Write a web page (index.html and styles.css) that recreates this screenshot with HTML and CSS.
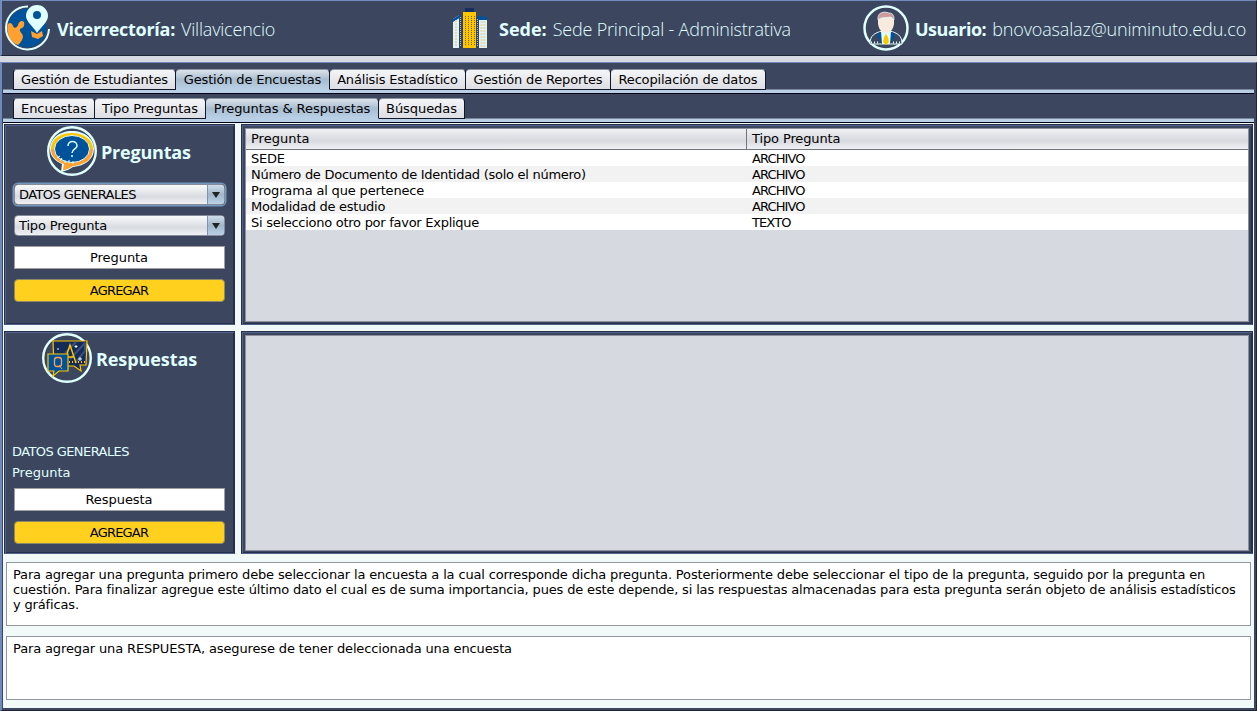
FILE: index.html
```
<!DOCTYPE html>
<html lang="es">
<head>
<meta charset="utf-8">
<title>Gestión de Encuestas</title>
<link rel="stylesheet" href="styles.css">
</head>
<body>
<header class="top">
  <div class="info place">
    <svg class="ic-globe" width="50" height="50" viewBox="0 0 50 50">
      <circle cx="23" cy="26" r="19.500" fill="#00529b"/>
      <path d="M4 22c2-2 4-1 5 2 1 3 4 2 5-1 1-4 4-5 6-3 1 4-1 6-4 7-1 3 3 4 3 8-1 4-3 6-5 8-6-2-10-7-10-13-1-3-1-5 0-8z" fill="#ffa030"/>
      <path d="M27 29l6 3 5-3 1 5-5 3-6-2z" fill="#ffa030"/>
      <path d="M24 4.500A21.500 21.500 0 1 0 45 27" fill="none" stroke="#e0ffff" stroke-width="2"/>
      <path d="M33 31c-3-6-11-11-11-17a11 11 0 0 1 22 0c0 6-7 11-11 17z" fill="#e0ffff"/>
      <circle cx="33" cy="13" r="4" fill="#00529b"/>
    </svg>
    <b>Vicerrectoría:</b><span>Villavicencio</span>
  </div>
  <div class="info site">
    <svg width="36" height="42" viewBox="0 0 36 42">
      <path d="M1 12l8-5v34H1z" fill="#e0f4f4"/><path d="M1 12l8-5v3l-8 5z" fill="#00529b"/>
      <path d="M4 13v27M8 11v29" stroke="#ead8ac" stroke-width="2" stroke-dasharray="2 1"/>
      <path d="M7 7h4v34H7zM24 9h4v32h-4z" fill="#294475"/>
      <path d="M8.500 10v30M25.500 12v28" stroke="#d5b980" stroke-dasharray="1 1"/>
      <path d="M27 10h8v31h-8z" fill="#e0f4f4"/><path d="M26 9l9 1v3h-9z" fill="#00529b"/>
      <path d="M29.500 14v26M32.500 14v26" stroke="#ead8ac" stroke-width="2" stroke-dasharray="2 1"/>
      <path d="M13 1h9v5h-9z" fill="#143060"/><path d="M11 5h13v36H11z" fill="#ffc600"/>
      <path d="M13.500 9v30M16.500 9v30M19.500 9v30M22.500 9v30" stroke="#6d6530" stroke-dasharray="1 1"/>
    </svg>
    <b>Sede:</b><span>Sede Principal - Administrativa</span>
  </div>
  <div class="info user">
    <svg width="46" height="46" viewBox="0 0 46 46">
      <circle cx="23" cy="23" r="21.500" fill="none" stroke="#e0ffff" stroke-width="2.500"/>
      <path d="M7 39c0-9 5-11 12-13h8c7 2 12 4 12 13z" fill="#3c465f" stroke="#e0ffff"/>
      <path d="M16 27l7 5 7-5 2 4-5 8h-8l-5-8z" fill="#00529b"/>
      <path d="M18 26h10l-1 13h-8z" fill="#e0ffff"/>
      <path d="M23 29l2 3 1 5-3 3-3-3 1-5z" fill="#ffc600"/>
      <path d="M15 14c0-7 16-7 16 0v5c-1 6-4 9-8 9s-7-3-8-9z" fill="#f8eadc"/>
      <path d="M15 15c-1-8 6-9 11-7 5 0 5 4 5 7l-3-3-10 1z" fill="#cf9c9c" stroke="#e0ffff" stroke-width=".7"/>
      <path d="M8 37.500h9M30 37.500h9" stroke="#e0ffff" stroke-width="2" stroke-dasharray="1 2"/>
    </svg>
    <b>Usuario:</b><span>bnovoasalaz@uniminuto.edu.co</span>
  </div>
</header>
<main class="frame">
  <nav class="tabs main-tabs">
    <div class="tab w162">Gestión de Estudiantes</div>
    <div class="tab w153 on">Gestión de Encuestas</div>
    <div class="tab w135">Análisis Estadístico</div>
    <div class="tab w144">Gestión de Reportes</div>
    <div class="tab w154">Recopilación de datos</div>
  </nav>
  <nav class="tabs">
    <div class="tab w81">Encuestas</div>
    <div class="tab w110">Tipo Preguntas</div>
    <div class="tab w172 on">Preguntas &amp; Respuestas</div>
    <div class="tab w85">Búsquedas</div>
  </nav>
  <div class="content">
    <section class="grid">
      <div class="panel form">
        <h2 class="q-title">
          <svg width="50" height="50" viewBox="0 0 50 50">
            <circle cx="25" cy="25" r="23.800" fill="none" stroke="#e0ffff" stroke-width="2.400"/>
            <path d="M25 5c13 0 22 8 22 18S38 40 26 41c-3 2-7 4-12 5l1-8C8 35 3 30 3 23 3 13 12 5 25 5z" fill="#e0ffff"/>
            <path d="M4 23h42c0 10-8 16-20 17-3 2-7 4-10 4l1-6C9 35 4 30 4 23z" fill="#ffa030"/>
            <path d="M4 23C4 13 13 7 25 7s21 7 21 16z" fill="#ffc600"/>
            <ellipse cx="25" cy="23" rx="17.500" ry="13.500" fill="#00529b" stroke="#e0ffff"/>
            <path d="M21 20c0-6 9-6 9 0 0 3-5 3-5 7M25 29v2" fill="none" stroke="#e0ffff" stroke-width="1.500"/>
            <path d="M10 32l3-2M13 35l2-3M18 37v-3M22 37v-3M26 38v-3" stroke="#e0ffff"/>
          </svg><span>Preguntas</span>
        </h2>
        <div class="combo focus"><span class="caps">DATOS GENERALES</span><i></i></div>
        <div class="combo second"><span class="mixed">Tipo Pregunta</span><i></i></div>
        <div class="field">Pregunta</div>
        <div class="btn">AGREGAR</div>
      </div>
      <div class="panel view">
        <div class="scroll">
          <div class="row head"><span>Pregunta</span><span>Tipo Pregunta</span></div>
          <div class="row"><span>SEDE</span><span>ARCHIVO</span></div>
          <div class="row"><span>Número de Documento de Identidad (solo el número)</span><span>ARCHIVO</span></div>
          <div class="row"><span>Programa al que pertenece</span><span>ARCHIVO</span></div>
          <div class="row"><span>Modalidad de estudio</span><span>ARCHIVO</span></div>
          <div class="row"><span>Si selecciono otro por favor Explique</span><span>TEXTO</span></div>
        </div>
      </div>
      <div class="panel form">
        <h2 class="r-title">
          <svg width="50" height="50" viewBox="0 0 50 50">
            <circle cx="25" cy="25" r="23.800" fill="none" stroke="#e0ffff" stroke-width="2.400"/>
            <path d="M11 8h34l-1 24h-6l1 6-7-5H12z" fill="#142b58" stroke="#ffc600" stroke-width="1.200"/>
            <path d="M28 26L43 10v8L33 30M23 20l11-11" fill="none" stroke="#3c5078" stroke-width="2"/>
            <path d="M22 30l6-18 6 18M24 24h8" fill="none" stroke="#ffc600" stroke-width="1.400"/>
            <path d="M27 29h16" stroke="#ffc600" stroke-width="2" stroke-dasharray="1 2"/>
            <path d="M16 15v2M34 12v3M32.500 13.500h3M38 24v4M36 26h4" stroke="#e0ffff"/>
            <path d="M6 21h20v17h-9l-6 5 1-5H6z" fill="#00529b" stroke="#ffc600" stroke-width="1.200"/>
            <rect x="12.500" y="24.500" width="7" height="9" rx="2.500" fill="none" stroke="#ffa050" stroke-width="1.300"/><path d="M17 32l3 4" stroke="#ffa050"/>
          </svg><span>Respuestas</span>
        </h2>
        <p class="label first caps">DATOS GENERALES</p>
        <p class="label">Pregunta</p>
        <div class="field answer">Respuesta</div>
        <div class="btn">AGREGAR</div>
      </div>
      <div class="panel view"><div class="scroll"></div></div>
    </section>
    <div class="note">Para agregar una pregunta primero debe seleccionar la encuesta a la cual corresponde dicha pregunta. Posteriormente debe seleccionar el tipo de la pregunta, seguido por la pregunta en<br>cuestión. Para finalizar agregue este último dato el cual es de suma importancia, pues de este depende, si las respuestas almacenadas para esta pregunta serán objeto de análisis estadísticos<br>y gráficas.</div>
    <div class="note">Para agregar una RESPUESTA, asegurese de tener deleccionada una encuesta</div>
  </div>
</main>
</body>
</html>
```
FILE: styles.css
```
* { box-sizing: border-box; }
body { margin: 0; width: 1257px; height: 711px; overflow: hidden; background: #d6d9df; font: 13px/16px "DejaVu Sans", sans-serif; color: #000; display: flex; flex-direction: column; gap: 6px; }
svg { flex: none; display: block; }
.top { height: 56px; background: #3c465f; border: 1px solid; border-color: #748bc0 #1c2436 #1c2436 #748bc0; border-left-width: 2px; display: flex; }
.info { display: flex; align-items: center; height: 54px; white-space: nowrap; color: #e0ffff; font: 300 18px/24px "Open Sans", sans-serif; letter-spacing: -.2px; }
.info b { font-weight: 700; margin-left: 6px; margin-right: 6px; }
.info b, .info span, h2 span { padding-top: 1px; }
.place { width: 450px; padding-left: 2px; }
.place b { margin-left: 3px; letter-spacing: -.28px; }
.site { width: 411px; }
.site b { margin-left: 11px; letter-spacing: 0; }
.user { flex: 1; letter-spacing: -.15px; }
.user b { letter-spacing: -.5px; }
.ic-globe { margin-top: -3px; }
.frame { height: 649px; background: #3c465f; border: 1px solid; border-color: #7088bb #1c2436 #1c2436 #7088bb; border-left-width: 2px; padding: 0 2px 2px 1px; }
.tabs { height: 29px; padding: 4px 0 0 10px; display: flex; align-items: flex-start; letter-spacing: -.06px; background: linear-gradient(#3c465f 24px, #7b8799 24px, #7b8799 25px, #b8cfe5 25px, #b8cfe5 28px, #000018 28px); }
.main-tabs { height: 31px; padding-top: 6px; letter-spacing: -.17px; background: linear-gradient(#3c465f 26px, #7b8799 26px, #7b8799 27px, #b8cfe5 27px, #b8cfe5 30px, #000018 30px); }
.tab { height: 21px; line-height: 20px; text-align: center; white-space: nowrap; background: linear-gradient(#f4f5f7, #dcdee4); border: 1px solid #111827; border-top-color: #8b92a0; border-left-width: 0; border-radius: 4px 4px 0 0; }
.tab:first-child { border-left-width: 1px; }
.on { background: linear-gradient(#dbe3eb, #a9bdd0 50%, #b8cfe5); border-bottom-color: #b8cfe5; }
.w162 { width: 163px; } .w153 { width: 154px; } .w135 { width: 136px; } .w144 { width: 145px; } .w154 { width: 155px; }
.w81 { width: 82px; } .w110 { width: 111px; } .w172 { width: 173px; } .w85 { width: 86px; }
.content { height: 585px; background: #f2faf9; padding: 1px 1px 0 1px; }
.grid { display: grid; grid-template-columns: 231px 1012px; grid-template-rows: 201px 223px; column-gap: 6px; row-gap: 6px; }
.panel { background: #3c465f; border: 1px solid #25304a; border-bottom-color: #53628c; box-shadow: inset 1px 1px #53628c, inset -1px -1px #25304a; }
.form { padding: 1px 9px; }
.view { padding: 3px 3px 2px; }
h2 { margin: 0; height: 50px; display: flex; align-items: center; gap: 4px; color: #e0ffff; font: 700 18px/24px "Open Sans", sans-serif; letter-spacing: -.2px; }
.q-title { padding-left: 33px; }
.r-title { padding-left: 28px; letter-spacing: -.08px; }
.combo { height: 21px; width: 211px; display: flex; border-radius: 4px; border: 1px solid #858b98; background: linear-gradient(#fafafa, #d8dbe1 60%, #f0f1f4); overflow: hidden; line-height: 19px; }
.combo span { flex: 1; padding-left: 4px; }
.combo i { width: 17px; border-left: 1px solid #7c93aa; background: linear-gradient(#cfdde9, #9fb6cb 50%, #bad0e4); display: flex; align-items: center; justify-content: center; }
.combo i::before { content: ""; border: 4px solid transparent; border-top: 6px solid #222; border-bottom: 0; }
.focus { margin-top: 8px; box-shadow: 0 0 0 1.5px #7396bd; }
.second { margin-top: 10px; }
.caps { letter-spacing: -.58px; }
.mixed { letter-spacing: -.15px; }
.field { width: 211px; height: 23px; margin-top: 10px; border: 1px solid #9f9f9f; background: #fff; line-height: 21px; text-align: center; letter-spacing: -.05px; padding-right: 1px; }
.btn { width: 211px; height: 23px; margin-top: 10px; border: 1px solid #8d8865; border-radius: 4px; background: #ffd01d; text-align: center; line-height: 22px; letter-spacing: -.8px; padding-right: 1px; }
.label { margin: 5px 0 0 -2px; color: #e0ffff; line-height: 16px; }
.label.first { margin-top: 61px; }
.answer { margin-top: 7px; }
.scroll { height: 100%; border: 1px solid #8d909b; background: #d6d9df; }
.row { height: 16px; display: flex; line-height: 18px; background: #fff; white-space: nowrap; }
.row:nth-child(odd) { background: #f2f2f2; }
.row:nth-child(even) { background: #fff; }
.row span { padding-left: 5px; letter-spacing: -.27px; }
.row span:first-child { width: 501px; }
.row span:last-child { letter-spacing: -.9px; }
.row.head { height: 21px; line-height: 20px; background: linear-gradient(#f0f1f3, #dcdee3 45%, #d8dae0 60%, #eff1f3); border-bottom: 1px solid #70747d; }
.row.head span:first-child { border-right: 1px solid #70747d; letter-spacing: 0; }
.row.head span:last-child { letter-spacing: -.12px; }
.row:nth-child(4) span:first-child { letter-spacing: -.17px; }
.note { margin: 8px 0 0 2px; width: 1245px; height: 64px; padding: 4px 6px; background: #fff; border: 1px solid #9297a1; line-height: 15px; white-space: nowrap; letter-spacing: -.158px; }
.note + .note { margin-top: 10px; letter-spacing: -.13px; }
```
